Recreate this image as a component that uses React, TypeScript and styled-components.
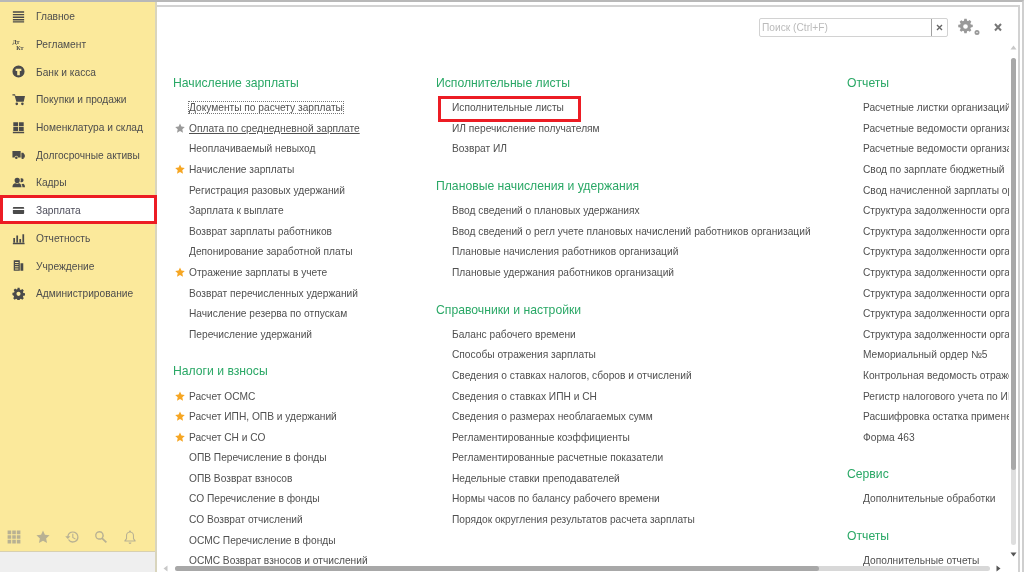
import React from "react";
import styled, { createGlobalStyle } from "styled-components";

const Global = createGlobalStyle`
  html, body { margin: 0; padding: 0; background: #fff; overflow: hidden; }
  #root { width: 1024px; height: 572px; }
`;

const Shell = styled.div`
  width: 1024px; height: 572px; display: flex; overflow: hidden; box-sizing: border-box;
  border-top: 2px solid #b8b8b8; border-right: 2px solid #cfcfcf;
  font-family: "Liberation Sans", Arial, sans-serif; background: #fff; filter: blur(0.4px);
`;
const Side = styled.aside`
  width: 157px; flex: none; display: flex; flex-direction: column; background: #efefef;
  border-right: 2px solid #d9d5bd; box-sizing: border-box;
`;
const SideYellow = styled.div`
  height: 550px; flex: none; background: #fbe99b; border-bottom: 1px solid #d8d0b0; box-sizing: border-box;
  display: flex; flex-direction: column;
`;
const NavList = styled.nav`flex: 1; display: flex; flex-direction: column;`;
const NavRow = styled.div<{ $active?: boolean }>`
  height: 27.7px; flex: none; display: flex; align-items: center; box-sizing: border-box;
  padding: 2px 0 0 36px; position: relative; font-size: 10.2px; color: #4d4d4d;
  ${(p) =>
    p.$active &&
    `background:#fff; color:#4d4d5a; width:157px; z-index:2;
     &::after { content:""; position:absolute; left:0; right:0; top:-1px; bottom:0; border:3px solid #ec1c24; box-sizing:border-box; }`}
`;
const NavIcon = styled.svg`position: absolute; left: 12px; top: 8px; width: 13px; height: 13px; fill: #4a4a4a;`;
const Tools = styled.div`display: flex; gap: 13px; padding: 0 0 6px 6px; align-items: center;`;
const ToolIcon = styled.svg`width: 16px; height: 16px; fill: #b8b193; flex: none;`;

const Main = styled.main`
  flex: 1; min-width: 0; display: flex; padding: 3px 2px 0 0; box-sizing: border-box;
`;
const Frame = styled.div`
  flex: 1; min-width: 0; position: relative; display: flex; flex-direction: column; box-sizing: border-box;
  border-top: 2px solid #d2d2d2; border-right: 2px solid #d2d2d2;
`;
const SearchBar = styled.div`height: 39px; display: flex; align-items: flex-start; justify-content: flex-end; padding: 11px 8px 0 0; flex: none; box-sizing: border-box;`;
const SearchBox = styled.div`
  width: 189px; height: 19px; display: flex; border: 1px solid #d2d2d2; border-radius: 2px; box-sizing: border-box;
  font-size: 10.2px; color: #bbb; line-height: 17px; margin-right: 9px;
`;
const SearchText = styled.div`flex: 1; padding-left: 2px; border-right: 1px solid #a0a0a0;`;
const SearchClear = styled.svg`width: 15px; height: 17px; stroke: #666; stroke-width: 1.4; flex: none;`;
const GearBtn = styled.svg`width: 24px; height: 22px; fill: #999; flex: none; margin-right: 5px;`;
const CloseBtn = styled.svg`width: 24px; height: 19px; stroke: #777; stroke-width: 2; flex: none;`;

const Body = styled.div`flex: 1; min-height: 0; display: flex; overflow: hidden; padding-top: 26px; margin: 0 9px 6px 0; position: relative;`;
const Column = styled.div<{ $w: number }>`flex: none; width: ${(p) => p.$w}px; display: flex; flex-direction: column; padding-left: 16px; box-sizing: border-box; white-space: nowrap;`;
const Section = styled.section`margin-bottom: 16px;`;
const Heading = styled.h3`margin: 0 0 3.2px; height: 22px; line-height: 22px; font-size: 12.2px; font-weight: normal; color: #2aa866;`;
const Item = styled.div<{ $focus?: boolean; $link?: boolean }>`
  height: 20.6px; line-height: 22.6px; font-size: 10.2px; color: #505050; padding-left: 16px; position: relative;
  span { ${(p) => p.$link && "text-decoration: underline;"} ${(p) => p.$focus && "outline: 1px dotted #777; outline-offset: 0;"} }
`;
const Star = styled.svg<{ $c: string }>`position: absolute; left: 2px; top: 5px; width: 10px; height: 10px; fill: ${(p) => p.$c};`;
const Mark = styled.div`position: absolute; left: 281px; top: 50px; width: 143px; height: 26px; border: 3px solid #ec1c24; box-sizing: border-box; pointer-events: none;`;

const VTrack = styled.div`position: absolute; right: 2px; top: 51px; width: 5px; height: 487px; border-radius: 3px; background: #dedede;`;
const VThumb = styled.div`width: 5px; height: 412px; border-radius: 3px; background: #a8a8a8;`;
const HTrack = styled.div`position: absolute; left: 18px; bottom: 1px; width: 815px; height: 5px; border-radius: 3px; background: #d8d8d8;`;
const HThumb = styled.div`width: 644px; height: 5px; border-radius: 3px; background: #a8a8a8;`;
const Arrow = styled.svg<{ $c: string; $pos: string }>`position: absolute; width: 7px; height: 7px; fill: ${(p) => p.$c}; ${(p) => p.$pos}`;

const StarPath = "M5 .5l1.4 3.1 3.4.4-2.5 2.3.7 3.4L5 8l-3 1.7.7-3.4L.2 4l3.4-.4z";

type Row = { t: string; star?: "o" | "g"; focus?: boolean; link?: boolean };
const r = (t: string, star?: "o" | "g"): Row => ({ t, star });

const cols: { w: number; secs: { h: string; rows: Row[] }[] }[] = [
  { w: 263, secs: [
    { h: "Начисление зарплаты", rows: [
      { t: "Документы по расчету зарплаты", focus: true },
      { t: "Оплата по среднедневной зарплате", star: "g", link: true },
      r("Неоплачиваемый невыход"), r("Начисление зарплаты", "o"), r("Регистрация разовых удержаний"),
      r("Зарплата к выплате"), r("Возврат зарплаты работников"), r("Депонирование заработной платы"),
      r("Отражение зарплаты в учете", "o"), r("Возврат перечисленных удержаний"),
      r("Начисление резерва по отпускам"), r("Перечисление удержаний"),
    ]},
    { h: "Налоги и взносы", rows: [
      r("Расчет ОСМС", "o"), r("Расчет ИПН, ОПВ и удержаний", "o"), r("Расчет СН и СО", "o"),
      r("ОПВ Перечисление в фонды"), r("ОПВ Возврат взносов"), r("СО Перечисление в фонды"),
      r("СО Возврат отчислений"), r("ОСМС Перечисление в фонды"), r("ОСМС Возврат взносов и отчислений"),
    ]},
  ]},
  { w: 411, secs: [
    { h: "Исполнительные листы", rows: [r("Исполнительные листы"), r("ИЛ перечисление получателям"), r("Возврат ИЛ")] },
    { h: "Плановые начисления и удержания", rows: [
      r("Ввод сведений о плановых удержаниях"),
      r("Ввод сведений о регл учете плановых начислений работников организаций"),
      r("Плановые начисления работников организаций"), r("Плановые удержания работников организаций"),
    ]},
    { h: "Справочники и настройки", rows: [
      r("Баланс рабочего времени"), r("Способы отражения зарплаты"), r("Сведения о ставках налогов, сборов и отчислений"),
      r("Сведения о ставках ИПН и СН"), r("Сведения о размерах необлагаемых сумм"), r("Регламентированные коэффициенты"),
      r("Регламентированные расчетные показатели"), r("Недельные ставки преподавателей"),
      r("Нормы часов по балансу рабочего времени"), r("Порядок округления результатов расчета зарплаты"),
    ]},
  ]},
  { w: 300, secs: [
    { h: "Отчеты", rows: [
      r("Расчетные листки организаций"), r("Расчетные ведомости организаций"), r("Расчетные ведомости организаций"),
      r("Свод по зарплате бюджетный"), r("Свод начисленной зарплаты организаций"), r("Структура задолженности организаций"),
      r("Структура задолженности организаций"), r("Структура задолженности организаций"), r("Структура задолженности организаций"),
      r("Структура задолженности организаций"), r("Структура задолженности организаций"), r("Структура задолженности организаций"),
      r("Мемориальный ордер №5"), r("Контрольная ведомость отражения"), r("Регистр налогового учета по ИПН"),
      r("Расшифровка остатка применения"), r("Форма 463"),
    ]},
    { h: "Сервис", rows: [r("Дополнительные обработки")] },
    { h: "Отчеты", rows: [r("Дополнительные отчеты")] },
  ]},
];

const nav: { t: string; active?: boolean; icon: React.ReactNode }[] = [
  { t: "Главное", icon: <path d="M1 1.500h13v1.700H1zM1 4.500h13v1.700H1zM1 7.500h13v1.700H1zM1 10.500h13v1.700H1zM1 13h13v1.500H1z" /> },
  { t: "Регламент", icon: <>
    <text x="0.5" y="6.500" fontSize="7" fontWeight="bold" fontFamily="Liberation Serif, serif">Дт</text>
    <text x="5" y="14" fontSize="7" fontWeight="bold" fontFamily="Liberation Serif, serif">Кт</text>
  </> },
  { t: "Банк и касса", icon: <path fillRule="evenodd" d="M7.500 .5a7 7 0 1 0 0 14 7 7 0 0 0 0-14zM4.200 4.200h6.600V7H9v4.800H6V7H4.200z" /> },
  { t: "Покупки и продажи", icon: <path d="M.5 1.500h3l.5 2h11l-1.500 6.500H5L3 3H.5zM5.500 11a1.500 1.500 0 1 1 0 3 1.500 1.500 0 0 1 0-3zM12 11a1.500 1.500 0 1 1 0 3 1.500 1.500 0 0 1 0-3z" /> },
  { t: "Номенклатура и склад", icon: <path d="M1.500 1.500h5.500v4.500H1.500zM8 1.500h5.500v4.500H8zM1.500 7h5.500v4.500H1.500zM8 7h5.500v4.500H8zM1 12.500h13V14H1z" /> },
  { t: "Долгосрочные активы", icon: <path d="M.5 3.500h9.500v7.500H7a2 2 0 0 0-4 0H.5zM10.800 5.500h2.200l1.800 2.500v3h-.8a2 2 0 0 0-3.200-.5zM5 9.800a1.500 1.500 0 1 1 0 3 1.500 1.500 0 0 1 0-3zM12.300 9.800a1.500 1.500 0 1 1 0 3 1.500 1.500 0 0 1 0-3z" /> },
  { t: "Кадры", icon: <path d="M6 2a3 3 0 0 1 3 3.200C9 7 8 8.200 6 8.200S3 7 3 5.200A3 3 0 0 1 6 2zM.5 13c0-3 1.500-4.200 3.500-4.500 1.300.6 2.700.6 4 0 1.500.3 2.800 1.400 3 4.500zM11 2.500a2.300 2.300 0 0 1 2.300 2.500c0 1.500-1 2.300-2.300 2.300-.5 0-1-.1-1.300-.4.5-1.300.6-2.700.2-4.100.3-.2.7-.3 1.100-.3zM12 13c0-1.700-.4-2.900-1.300-3.700.8.100 1.400 0 2-.3C14 9.300 15 10.500 15 13z" /> },
  { t: "Зарплата", active: true, icon: <path fillRule="evenodd" d="M2 3.500h11a1 1 0 0 1 1 1v6a1 1 0 0 1-1 1H2a1 1 0 0 1-1-1v-6a1 1 0 0 1 1-1zM1 5.500V7h13V5.500z" /> },
  { t: "Отчетность", icon: <path d="M1.500 7h2v5h-2zM5 4h2v8H5zM8.500 8h2v4h-2zM12 2.500h2V12h-2zM1 12.500h13.500V14H1z" /> },
  { t: "Учреждение", icon: <path fillRule="evenodd" d="M2 1.500h7v12H2zM9.800 5H13v8.500H9.800zM3.500 3.500v1h4v-1zM3.500 6v1h4V6zM3.500 8.500v1h4v-1zM3.500 11v1h4v-1z" /> },
  { t: "Администрирование", icon: <path fillRule="evenodd" d="M6.300 1h2.400l.4 1.900 1.200.5 1.600-1 1.700 1.700-1 1.600.5 1.200 1.900.4v2.400l-1.900.4-.5 1.200 1 1.600-1.700 1.700-1.600-1-1.200.5-.4 1.900H6.300l-.4-1.900-1.200-.5-1.600 1-1.700-1.700 1-1.600-.5-1.200L.5 9.100V6.700l1.900-.4.500-1.200-1-1.600 1.700-1.700 1.600 1 1.200-.5zM7.500 5.500a2.400 2.400 0 1 0 0 4.800 2.400 2.400 0 0 0 0-4.800z" /> },
];

export default function App() {
  return (
    <>
      <Global />
      <Shell>
        <Side>
          <SideYellow>
            <NavList>
              {nav.map((n) => (
                <NavRow key={n.t} $active={n.active}>
                  <NavIcon viewBox="0 0 15 15">{n.icon}</NavIcon>
                  {n.t}
                </NavRow>
              ))}
            </NavList>
            <Tools>
              <ToolIcon viewBox="0 0 20 20"><path d="M2 2h4.500v4.500H2zM7.800 2h4.500v4.500H7.800zM13.500 2H18v4.500h-4.500zM2 7.800h4.500v4.500H2zM7.800 7.800h4.500v4.500H7.800zM13.500 7.800H18v4.500h-4.500zM2 13.500h4.500V18H2zM7.800 13.500h4.500V18H7.800zM13.500 13.500H18V18h-4.500z" /></ToolIcon>
              <ToolIcon viewBox="0 0 20 20"><path d="M10 2l2.400 5.300 5.800.6-4.300 3.900 1.200 5.700L10 14.600l-5.100 2.900 1.200-5.700L1.800 7.900l5.800-.6z" /></ToolIcon>
              <ToolIcon viewBox="0 0 20 20"><path d="M11 3a7 7 0 1 1-6 10.500l1.300-.8A5.500 5.500 0 1 0 5.600 9H8l-3.200 3.500L1.500 9h2.600A7 7 0 0 1 11 3zM10.300 6h1.400v4.300l3 1.800-.7 1.100-3.700-2.200z" /></ToolIcon>
              <ToolIcon viewBox="0 0 20 20"><path fillRule="evenodd" d="M8 2.500a5.500 5.500 0 0 1 4.500 8.700l5 4.600-1.500 1.600-5-4.700A5.500 5.500 0 1 1 8 2.500zM8 4.300a3.700 3.700 0 1 0 0 7.400 3.700 3.700 0 0 0 0-7.400z" /></ToolIcon>
              <ToolIcon viewBox="0 0 20 20"><path fillRule="evenodd" d="M10 2a1.300 1.300 0 0 1 1.300 1.300c2.500.6 3.700 2.500 3.700 5v3.500l2 2.700v1H3v-1l2-2.700V8.300c0-2.500 1.200-4.400 3.700-5A1.300 1.300 0 0 1 10 2zM10 4.500c-2.300 0-3.700 1.500-3.700 3.800v4l-1.300 2.200h10l-1.300-2.200v-4c0-2.300-1.400-3.800-3.700-3.800zM8.200 17h3.600a1.800 1.800 0 0 1-3.600 0z" /></ToolIcon>
            </Tools>
          </SideYellow>
        </Side>
        <Main>
          <Frame>
            <SearchBar>
              <SearchBox>
                <SearchText>Поиск (Ctrl+F)</SearchText>
                <SearchClear viewBox="0 0 15 17"><path d="M5 6l5 5M10 6l-5 5" /></SearchClear>
              </SearchBox>
              <GearBtn viewBox="0 0 24 22">
                <g transform="translate(8.500 8.500) scale(.78) translate(-10.500 -11.500)">
                  <path fillRule="evenodd" d="M9 1.500h3l.5 2.500 1.400.6 2-1.300 2.100 2.100-1.300 2 .6 1.400 2.500.5v3l-2.500.5-.6 1.400 1.300 2-2.100 2.100-2-1.300-1.400.6-.5 2.500H9l-.5-2.500-1.400-.6-2 1.300L3 16.300l1.300-2-.6-1.400-2.500-.5v-3l2.500-.5.6-1.400-1.300-2 2.100-2.100 2 1.300 1.400-.6zM10.500 8.500a3 3 0 1 0 0 6 3 3 0 0 0 0-6z" />
                </g>
                <path fillRule="evenodd" d="M20 12a2.500 2.500 0 1 1 0 5 2.500 2.500 0 0 1 0-5zM20 13.800a.7.7 0 1 0 0 1.400.7.7 0 0 0 0-1.400z" />
              </GearBtn>
              <CloseBtn viewBox="0 0 24 19"><path d="M9 6l6 6.500M15 6l-6 6.500" /></CloseBtn>
            </SearchBar>
            <Body>
              {cols.map((c, i) => (
                <Column key={i} $w={c.w}>
                  {c.secs.map((s, j) => (
                    <Section key={j}>
                      <Heading>{s.h}</Heading>
                      {s.rows.map((row, k) => (
                        <Item key={k} $focus={row.focus} $link={row.link}>
                          {row.star && <Star $c={row.star === "o" ? "#f6a623" : "#9a9a9a"} viewBox="0 0 10 10"><path d={StarPath} /></Star>}
                          <span>{row.t}</span>
                        </Item>
                      ))}
                    </Section>
                  ))}
                </Column>
              ))}
              <Mark />
            </Body>
            <Arrow $c="#c8c8c8" $pos="right: 1.500px; top: 37px;" viewBox="0 0 7 7"><path d="M3.500 1.500L6.500 5.500H.5z" /></Arrow>
            <VTrack><VThumb /></VTrack>
            <Arrow $c="#555" $pos="right: 1.500px; top: 544px;" viewBox="0 0 7 7"><path d="M3.500 5.500L6.500 1.500H.5z" /></Arrow>
            <Arrow $c="#c8c8c8" $pos="left: 4.500px; bottom: 0;" viewBox="0 0 7 7"><path d="M1.500 3.500L5.500 .5v6z" /></Arrow>
            <HTrack><HThumb /></HTrack>
            <Arrow $c="#555" $pos="left: 838px; bottom: 0;" viewBox="0 0 7 7"><path d="M5.500 3.500L1.500 .5v6z" /></Arrow>
          </Frame>
        </Main>
      </Shell>
    </>
  );
}
